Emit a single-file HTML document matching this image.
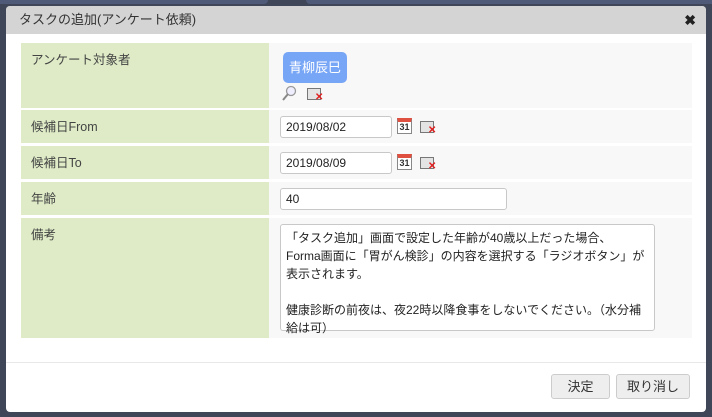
<!DOCTYPE html>
<html><head><meta charset="utf-8"><style>
*{box-sizing:border-box;margin:0;padding:0}
body{width:712px;height:417px;background:#3e4658;position:relative;overflow:hidden;font-family:"Liberation Sans","Noto Sans CJK JP",sans-serif;font-size:12px;color:#333}
.topbar1{position:absolute;left:0;top:0;width:268px;height:4px;background:#4e5a78;border-radius:0 0 6px 0}
.topbar2{position:absolute;left:306px;top:0;width:406px;height:4px;background:#4e5a78;border-radius:0 0 0 6px}
.dlg{position:absolute;left:6px;top:6px;width:700px;height:406px;background:#fff;border-radius:4px;overflow:hidden}
.title{height:28px;background:#d4d4d4;font-size:13px;line-height:28px;padding-left:13px;color:#333}
.x{position:absolute;right:10px;top:6px;font-size:14px;font-weight:bold;color:#222}
.row{position:absolute;left:15px;width:671px;display:flex}
.lab{width:248px;background:#deebc6;padding:6px 0 0 10px;font-size:12.5px;color:#444}
.val{flex:1;background:#f8f8f8;position:relative}
.inp{position:absolute;background:#fff;border:1px solid #c8c8c8;border-radius:3px;height:22px;font-size:12px;line-height:20px;padding-left:5px;color:#222}
.cal{position:absolute;width:15px;height:16px;border:1px solid #888;border-top:4px solid #e05040;background:#fff;font-size:9px;line-height:11px;text-align:center;color:#333;font-weight:bold}
.clr{position:absolute;width:14px;height:12px;border:1px solid #777;background:#e4e4e4}
.clr::after{content:"✕";position:absolute;left:7px;top:3px;color:#e02020;font-size:10px;font-weight:bold}
.btn{position:absolute;top:368px;height:25px;border:1px solid #ccc;border-radius:3px;background:#eee;font-size:13px;line-height:23px;text-align:center;color:#333}
</style></head><body>
<div class="topbar1"></div><div class="topbar2"></div>
<div class="dlg">
<div class="title">タスクの追加(アンケート依頼)</div><div class="x">✖</div>
<div class="row" style="top:37px;height:65px"><div class="lab">アンケート対象者</div><div class="val">
<div style="position:absolute;left:14px;top:9px;width:64px;height:31px;background:#78a6f6;border-radius:5px;color:#fff;font-size:13px;line-height:31px;text-align:center">青柳辰巳</div>
<svg style="position:absolute;left:12px;top:42px" width="16" height="16"><circle cx="10" cy="6" r="4.5" fill="#eef" stroke="#999" stroke-width="1.3"/><line x1="7" y1="9" x2="2" y2="15" stroke="#888" stroke-width="2"/></svg>
<div class="clr" style="left:38px;top:45px"></div></div></div>
<div class="row" style="top:104px;height:33px"><div class="lab">候補日From</div><div class="val">
<div class="inp" style="left:11px;top:6px;width:112px">2019/08/02</div><div class="cal" style="left:128px;top:8px">31</div><div class="clr" style="left:151px;top:11px"></div></div></div>
<div class="row" style="top:140px;height:33px"><div class="lab">候補日To</div><div class="val">
<div class="inp" style="left:11px;top:6px;width:112px">2019/08/09</div><div class="cal" style="left:128px;top:8px">31</div><div class="clr" style="left:151px;top:11px"></div></div></div>
<div class="row" style="top:176px;height:33px"><div class="lab">年齢</div><div class="val">
<div class="inp" style="left:11px;top:6px;width:227px">40</div></div></div>
<div class="row" style="top:212px;height:120px"><div class="lab">備考</div><div class="val">
<div class="inp" style="left:11px;top:6px;width:375px;height:107px;line-height:18px;padding:4px 5px;font-size:12px">「タスク追加」画面で設定した年齢が40歳以上だった場合、<br>Forma画面に「胃がん検診」の内容を選択する「ラジオボタン」が<br>表示されます。<br><br>健康診断の前夜は、夜22時以降食事をしないでください。（水分補<br>給は可）</div></div></div>
<div style="position:absolute;left:0;top:356px;width:700px;height:1px;background:#e8e8e8"></div>
<div class="btn" style="left:545px;width:59px">決定</div>
<div class="btn" style="left:610px;width:74px">取り消し</div>
</div>
</body></html>
